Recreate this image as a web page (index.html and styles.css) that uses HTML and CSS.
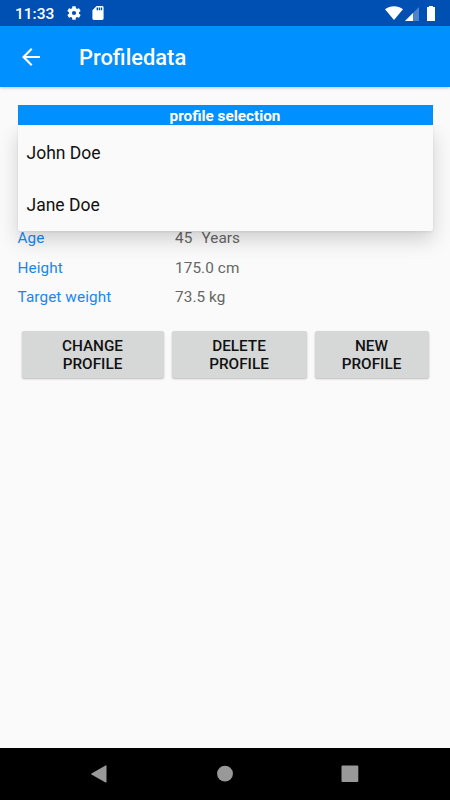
FILE: index.html
```
<!DOCTYPE html>
<html lang="en">
<head>
<meta charset="utf-8">
<title>Profiledata</title>
<link rel="stylesheet" href="styles.css">
</head>
<body>
<div class="screen">
  <div class="status">
    <span class="clock">11:33</span>
    <svg class="gear" viewBox="2 2 20 20"><path fill="#fff" fill-rule="evenodd" d="M19.14 12.94c.04-.3.06-.61.06-.94 0-.32-.02-.64-.07-.94l2.03-1.58c.18-.14.23-.41.12-.61l-1.92-3.32c-.12-.22-.37-.29-.59-.22l-2.39.96c-.5-.38-1.03-.7-1.62-.94l-.36-2.54c-.04-.24-.24-.41-.48-.41h-3.84c-.24 0-.43.17-.47.41l-.36 2.54c-.59.24-1.13.57-1.62.94l-2.39-.96c-.22-.08-.47 0-.59.22L2.74 8.87c-.12.21-.08.47.12.61l2.03 1.58c-.05.3-.09.63-.09.94s.02.64.07.94l-2.03 1.58c-.18.14-.23.41-.12.61l1.92 3.32c.12.22.37.29.59.22l2.39-.96c.5.38 1.03.7 1.62.94l.36 2.54c.05.24.24.41.48.41h3.84c.24 0 .44-.17.47-.41l.36-2.54c.59-.24 1.13-.56 1.62-.94l2.39.96c.22.08.47 0 .59-.22l1.92-3.32c.12-.22.07-.47-.12-.61l-2.01-1.58zM12 15a3 3 0 1 1 0-6 3 3 0 0 1 0 6z"/></svg>
    <svg class="card" viewBox="4 2 16 20"><path fill="#fff" d="M18 2h-8L4 8v12c0 1.100.9 2 2 2h12c1.100 0 2-.9 2-2V4c0-1.100-.9-2-2-2zm-6 6h-2V4h2v4zm3 0h-2V4h2v4zm3 0h-2V4h2v4z"/></svg>
    <svg class="wifi" viewBox="0 0 18 14"><path fill="#fff" d="M0 3.200C5-.9 13-.9 18 3.200L9 14z"/></svg>
    <svg class="signal" viewBox="0 0 14 14"><path fill="#fff" fill-opacity=".3" d="M14 0v14H0z"/><path fill="#fff" d="M8 6v8H0z"/></svg>
    <svg class="battery" viewBox="0 0 8 15"><path fill="#fff" d="M2 0h4v1h2v14H0V1h2z"/></svg>
  </div>
  <header class="toolbar">
    <svg class="back" viewBox="4 4 16 16"><path fill="#fff" d="M20 11.100H7.600l5.700-5.700L12 4l-8 8 8 8 1.300-1.400-5.700-5.700H20z"/></svg>
    <h1>Profiledata</h1>
  </header>
  <main>
    <div class="selection">
      <div class="heading">profile selection</div>
      <ul class="menu">
        <li>John Doe</li>
        <li>Jane Doe</li>
      </ul>
    </div>
    <dl class="facts">
      <dt>Age</dt><dd>45<span class="unit">Years</span></dd>
      <dt>Height</dt><dd>175.0 cm</dd>
      <dt>Target weight</dt><dd>73.5 kg</dd>
    </dl>
    <div class="actions">
      <button>CHANGE<br>PROFILE</button>
      <button>DELETE<br>PROFILE</button>
      <button>NEW<br>PROFILE</button>
    </div>
  </main>
  <nav class="navbar">
    <svg viewBox="0 0 18 18"><path fill="#999" d="M1.500 8.400 15.500.4q1-.5 1 .5v16q0 1-1 .5l-14-8q-.8-.5 0-1z"/></svg>
    <svg viewBox="0 0 18 18"><circle cx="9" cy="8.700" r="7.900" fill="#999"/></svg>
    <svg viewBox="0 0 18 18"><rect x=".5" y=".5" width="16.800" height="16.600" rx="1" fill="#999"/></svg>
  </nav>
</div>
</body>
</html>
```
FILE: styles.css
```
* { box-sizing: border-box; }
body { margin: 0; font-family: Roboto, sans-serif; }
.screen {
  width: 450px; height: 800px; overflow: hidden;
  display: flex; flex-direction: column;
  background: #fafafa;
}
.status {
  height: 26px; padding: 0 15px;
  display: flex; align-items: center;
  background: #004fb2; color: #fff;
}
.clock { width: 52px; padding-top: 2px; font-size: 15.500px; font-weight: 500; line-height: 18px; }
.gear { width: 14px; height: 14px; }
.card { width: 12px; height: 14px; margin-left: 11px; }
.wifi { width: 18px; height: 14px; margin-left: auto; }
.signal { width: 14px; height: 14px; margin: 1px 0 0 2px; }
.battery { width: 8px; height: 15px; margin: 1px 0 0 8px; }
.toolbar {
  position: relative; flex: none; height: 61px; padding-left: 22px;
  display: flex; align-items: center;
  background: #0090ff; color: #fff;
  box-shadow: 0 1px 3px rgba(0,0,0,.22);
}
.back { width: 18px; height: 18px; }
.toolbar h1 { margin: 2px 0 0 39px; font-size: 21.900px; font-weight: 500; line-height: 26px; }
main { flex: 1; padding: 18px 17.500px 0; }
.selection { position: relative; height: 119px; }
.heading {
  height: 20px; background: #0090ff; color: #fff;
  text-align: center; font-size: 15.300px; font-weight: 700; line-height: 22px;
}
.menu {
  position: absolute; top: 20px; left: 0; right: 0;
  margin: 0; padding: 1px 9px 0; height: 106px; list-style: none;
  background: #fafafa; border-radius: 0 0 2px 2px;
  box-shadow: 0 9px 20px rgba(0,0,0,.17), 0 1px 3px rgba(0,0,0,.08);
  clip-path: inset(0 -18px -40px -18px);
}
.menu li { height: 52.400px; font-size: 17.500px; line-height: 55px; color: #111; }
.facts {
  display: grid; grid-template-columns: 157.500px 1fr; grid-auto-rows: 29.500px;
  margin: 0; font-size: 15.300px; line-height: 29px; letter-spacing: .1px;
}
.facts dt { color: #1787f5; }
.facts dd { margin: 0; color: #666; letter-spacing: .1px; }
.unit { margin-left: 9px; }
.actions {
  display: grid; grid-template-columns: 142px 135px 114px; gap: 8px;
  margin: 18.500px 0 0 4px;
}
.actions button {
  height: 47px; padding: 1px 0 0; border: 0; border-radius: 2px;
  background: #d6d7d7; color: #111;
  font: 500 15.300px/18px Roboto, sans-serif;
  box-shadow: 0 1px 2px rgba(0,0,0,.25);
}
.navbar {
  height: 52px; padding: 0 91px 0 90px;
  display: flex; align-items: center; justify-content: space-between;
  background: #000;
}
.navbar svg { width: 18px; height: 18px; }
```
